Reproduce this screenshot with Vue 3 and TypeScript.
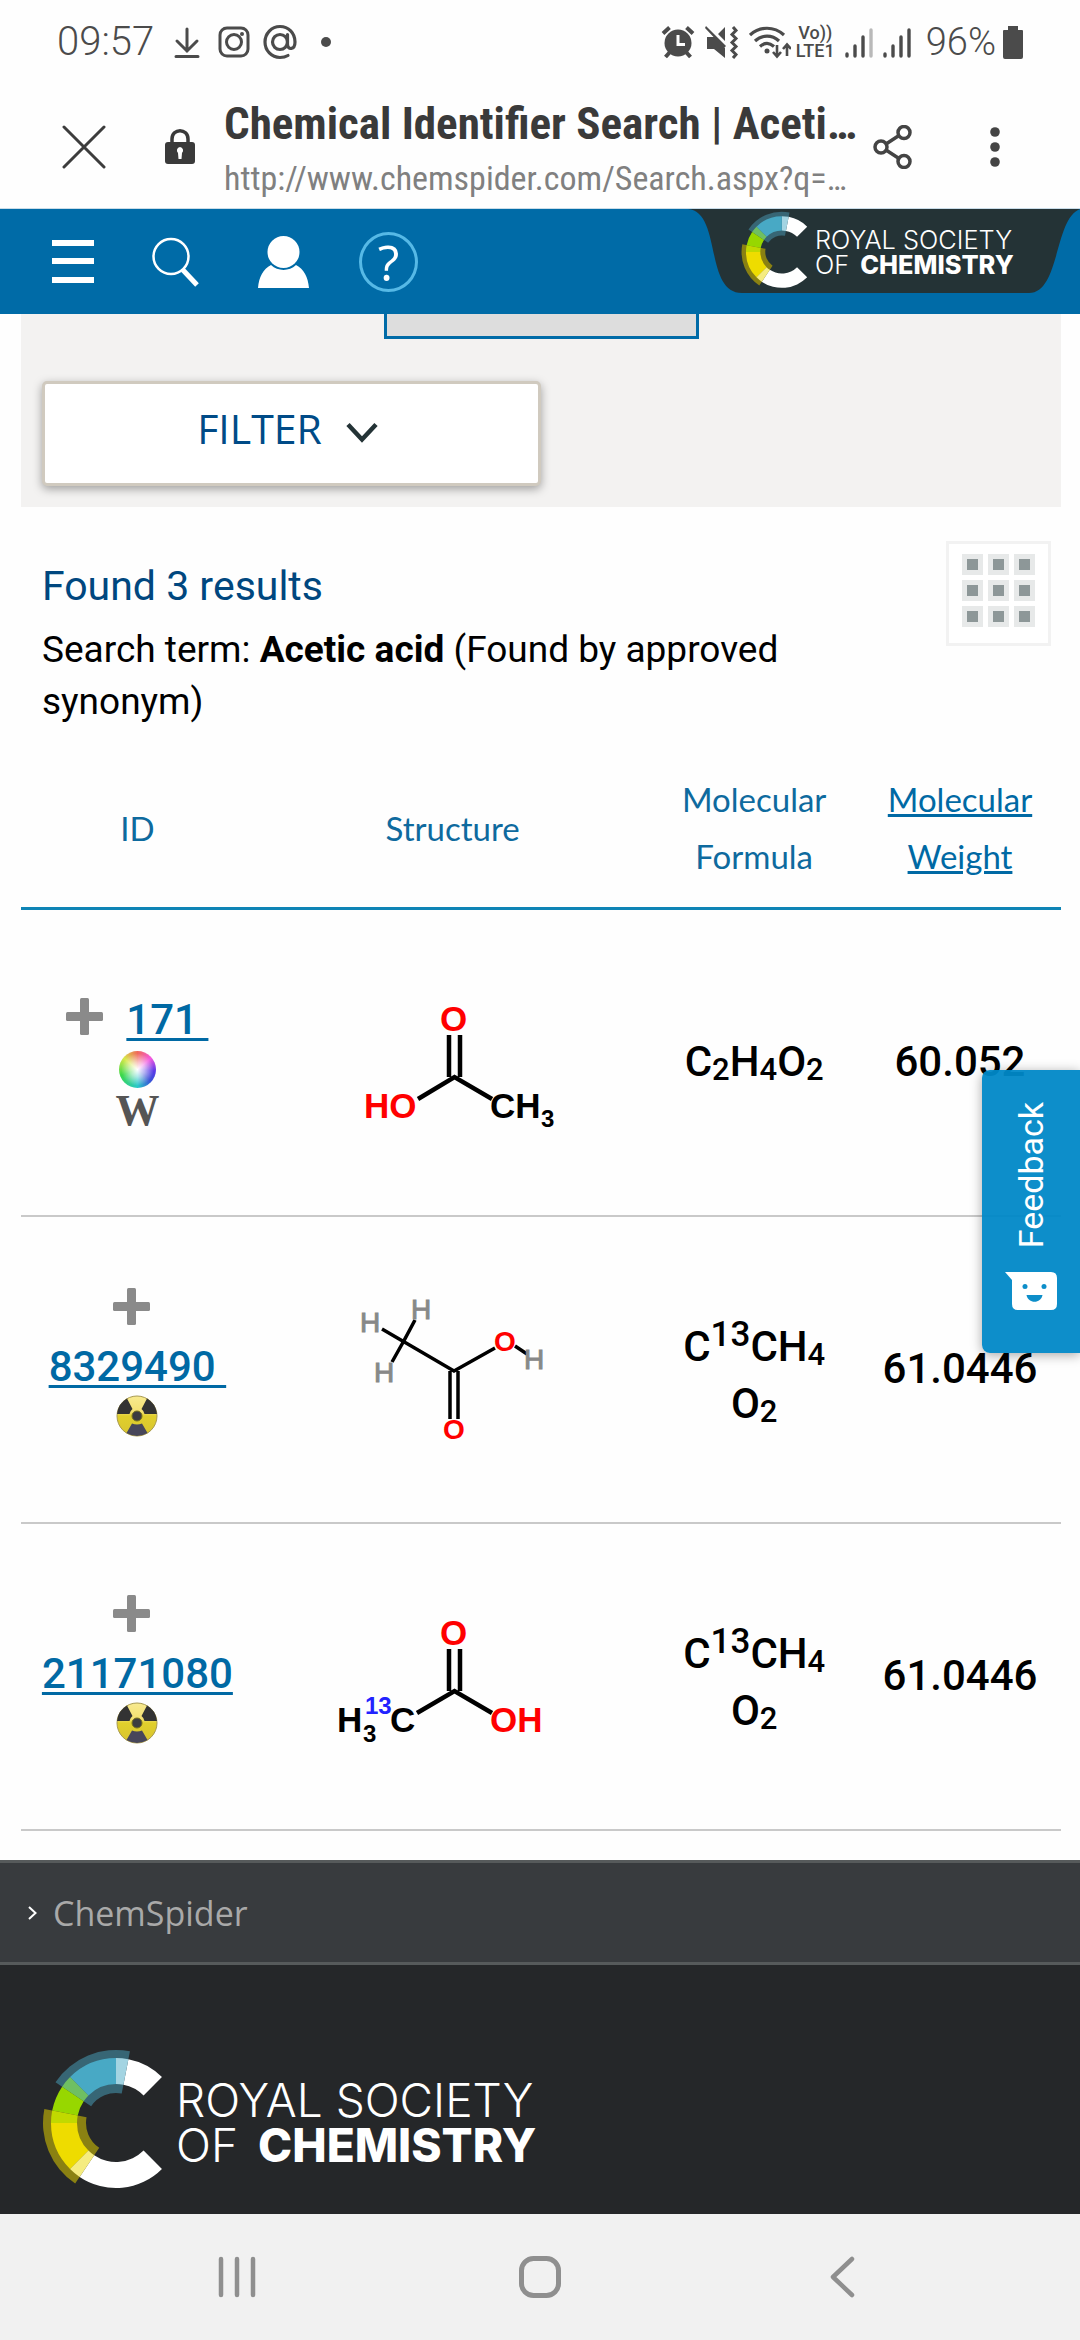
<script setup lang="ts">
interface FormulaPart {
  text: string
  kind: 'base' | 'sub' | 'sup' | 'break'
}

interface Result {
  id: string
  link: string
  inline: boolean
  badges: ('wheel' | 'wiki' | 'radiation')[]
  formula: FormulaPart[]
  weight: string
}

const b = (text: string): FormulaPart => ({ text, kind: 'base' })
const sub = (text: string): FormulaPart => ({ text, kind: 'sub' })
const sup = (text: string): FormulaPart => ({ text, kind: 'sup' })
const brk: FormulaPart = { text: '', kind: 'break' }

const labelled = [b('C'), sup('13'), b('CH'), sub('4'), brk, b('O'), sub('2')]

const results: Result[] = [
  {
    id: '171',
    link: '171 ',
    inline: true,
    badges: ['wheel', 'wiki'],
    formula: [b('C'), sub('2'), b('H'), sub('4'), b('O'), sub('2')],
    weight: '60.052',
  },
  { id: '8329490', link: '8329490 ', inline: false, badges: ['radiation'], formula: labelled, weight: '61.0446' },
  { id: '21171080', link: '21171080', inline: false, badges: ['radiation'], formula: labelled, weight: '61.0446' },
]

// Ring segment around (74, 74); angles in degrees clockwise from the top
function ring(inner: number, outer: number, from: number, to: number): string {
  const p = (r: number, a: number) => {
    const t = (a * Math.PI) / 180
    return `${(74 + r * Math.sin(t)).toFixed(2)} ${(74 - r * Math.cos(t)).toFixed(2)}`
  }
  const big = to - from > 180 ? 1 : 0
  return `M${p(outer, from)}A${outer} ${outer} 0 ${big} 1 ${p(outer, to)}L${p(inner, to)}A${inner} ${inner} 0 ${big} 0 ${p(inner, from)}Z`
}

const segments = [
  { d: ring(30, 73, -56, 11), fill: '#376675' },
  { d: ring(30, 73, -146, -79), fill: '#8a8112' },
  { d: ring(39, 65, 11, 45), fill: '#ffffff' },
  { d: ring(39, 65, 135, 214), fill: '#ffffff' },
  { d: ring(39, 65, 0, 11), fill: '#a3d4e2' },
  { d: ring(39, 65, -45, 0), fill: '#48a9c5' },
  { d: ring(39, 65, -56, -45), fill: '#6fbf62' },
  { d: ring(39, 65, -79, -56), fill: '#97d700' },
  { d: ring(39, 65, -90, -79), fill: '#c1d900' },
  { d: ring(39, 65, -135, -90), fill: '#eedc00' },
  { d: ring(39, 65, -146, -135), fill: '#f5ec80' },
]

const gridCells = [0, 1, 2].flatMap((r) => [0, 1, 2].map((c) => ({ x: c * 26, y: r * 26 })))
</script>

<template>
  <div class="screen">
    <div class="status">
      <span class="clock">09:57</span>
      <svg class="st-down" width="26" height="34" viewBox="0 0 26 34" fill="none" stroke="#4b4b4b" stroke-width="3" stroke-linecap="round">
        <path d="M13 4V26M3 16L13 26L23 16M2 31.500H24" />
      </svg>
      <svg class="st-insta" width="32" height="34" viewBox="0 0 32 34" fill="none" stroke="#4b4b4b" stroke-width="3">
        <rect x="2" y="3" width="28" height="28" rx="7" />
        <circle cx="16" cy="17" r="7.500" />
        <circle cx="24" cy="9" r="2" fill="#4b4b4b" stroke="none" />
      </svg>
      <svg class="st-at" width="34" height="36" viewBox="0 0 34 36" fill="none" stroke="#4b4b4b" stroke-width="3.200" stroke-linecap="round">
        <circle cx="17" cy="18" r="7.500" />
        <path d="M24.500 10.500V20C24.500 26.500 32 26 32 18C32 9 25.500 2.500 17 2.500S2 9.500 2 18S8.500 33.500 17 33.500C20 33.500 22.500 33 25 31.500" />
      </svg>
      <span class="st-dot"></span>
      <span class="grow"></span>
      <svg width="34" height="34" viewBox="0 0 34 34" stroke="#4b4b4b" stroke-width="4">
        <circle cx="17" cy="18" r="13.500" fill="#4b4b4b" stroke="none" />
        <path d="M2 8.500L8.500 2.500M32 8.500L25.500 2.500M9 27L4.500 32M25 27L29.500 32" />
        <path d="M17 10V19.500H24" fill="none" stroke="#fff" stroke-width="3" />
      </svg>
      <svg class="st-mute" width="34" height="34" viewBox="0 0 34 34" fill="#4b4b4b">
        <path d="M2 12H9L20 23V33L9 24H2ZM13 9L20 2V16ZM1 1L21 21L19 23L0 3Z" />
        <path d="M28 2L31 5.500L27 9.500L31 13.500L27 17.500L31 21.500L27 25.500L31 29.500L28 33" fill="none" stroke="#4b4b4b" stroke-width="3" />
      </svg>
      <svg class="st-wifi" width="42" height="34" viewBox="0 0 42 34" fill="none" stroke="#4b4b4b" stroke-width="3.200">
        <path d="M1 10C11 1 25 1 35 10M6 16C13 9.500 23 9.500 30 16M11 21.500C15.500 17.500 20.500 17.500 25 21.500" />
        <circle cx="18" cy="26" r="2.500" fill="#4b4b4b" stroke="none" />
        <path d="M28 20V31M24 27L28 31.500L32 27M38 31V20M34 24L38 19.500L42 24" stroke-width="2.600" />
      </svg>
      <span class="volte"><span>Vo))</span><span>LTE1</span></span>
      <svg class="st-sig" width="28" height="34" viewBox="0 0 28 34" stroke="#4b4b4b" stroke-width="3.400" stroke-linecap="round">
        <path d="M2 29V31M10 21V31M18 12V31" />
        <path d="M26 5V31" stroke="#b9b9b9" />
      </svg>
      <svg class="st-sig" width="28" height="34" viewBox="0 0 28 34" stroke="#4b4b4b" stroke-width="3.400" stroke-linecap="round">
        <path d="M2 29V31M10 21V31M18 12V31M26 5V31" />
      </svg>
      <span class="charge">96%</span>
      <svg class="st-bat" width="22" height="34" viewBox="0 0 22 34" fill="#4b4b4b">
        <path d="M6 1H16V5H20Q21 5 21 6V32Q21 34 19 34H3Q1 34 1 32V6Q1 5 2 5H6Z" />
      </svg>
    </div>

    <div class="toolbar">
      <button class="bare close" aria-label="Close tab">
        <svg width="44" height="44" viewBox="0 0 44 44" stroke="#3c3c3c" stroke-width="3" stroke-linecap="round">
          <path d="M2 2L42 42M42 2L2 42" />
        </svg>
      </button>
      <svg class="lock" width="30" height="36" viewBox="0 0 30 36">
        <path d="M7 15V10C7 -1 23 -1 23 10V15" fill="none" stroke="#3a3a3a" stroke-width="3.500" />
        <rect x="0" y="13" width="30" height="22" rx="3" fill="#3a3a3a" />
        <path d="M15 18A3.500 3.500 0 0 1 17 24L16.500 30H13.500L13 24A3.500 3.500 0 0 1 15 18Z" fill="#fff" />
      </svg>
      <div class="address">
        <div class="page-title">Chemical Identifier Search | Aceti…</div>
        <div class="page-url">http://www.chemspider.com/Search.aspx?q=…</div>
      </div>
      <button class="bare share" aria-label="Share">
        <svg width="40" height="44" viewBox="0 0 40 44" fill="none" stroke="#444" stroke-width="3.500">
          <circle cx="8" cy="22" r="6" /><circle cx="31" cy="7.500" r="6" /><circle cx="31" cy="36.500" r="6" />
          <path d="M13 19L26 10.500M13 25L26 33.500" />
        </svg>
      </button>
      <button class="bare more" aria-label="More options">
        <svg width="10" height="40" viewBox="0 0 10 40" fill="#444">
          <circle cx="5" cy="5" r="4.800" /><circle cx="5" cy="20" r="4.800" /><circle cx="5" cy="35" r="4.800" />
        </svg>
      </button>
    </div>

    <header class="site-bar">
      <button class="bare" aria-label="Menu">
        <svg width="44" height="44" viewBox="0 0 44 44" fill="#fff">
          <path d="M1 0H43V6H1ZM1 18H43V24H1ZM1 37H43V43H1Z" />
        </svg>
      </button>
      <button class="bare find" aria-label="Search">
        <svg width="48" height="50" viewBox="0 0 48 50" fill="none" stroke="#fff">
          <circle cx="19" cy="19.500" r="17.500" stroke-width="2.500" />
          <path d="M31 33L45 48" stroke-width="5" />
        </svg>
      </button>
      <button class="bare user" aria-label="Account">
        <svg width="51" height="54" viewBox="0 0 51 54" fill="#fff">
          <circle cx="25.500" cy="17" r="16" />
          <path d="M0 53C1 42 5 34 13 30C20 36.500 31 36.500 38 30C46 34 50 42 51 53Z" />
        </svg>
      </button>
      <a class="help" href="#help">?</a>
      <a class="brand" href="#rsc" aria-label="Royal Society of Chemistry">
        <svg class="brand-tab" viewBox="0 0 392 84" width="392" height="84" fill="#243336">
          <path d="M0 0C34 3 16 84 54 84H341C372 84 366 10 392 0Z" />
        </svg>
        <svg class="brand-logo" width="277" height="82" viewBox="0 0 502 148">
          <path v-for="(s, i) in segments" :key="i" :d="s.d" :fill="s.fill" />
          <g class="wordmark" fill="#fff">
            <text x="134" y="68">ROYAL SOCIETY</text>
            <text x="134" y="113">OF</text>
            <text class="strong" x="216" y="113">CHEMISTRY</text>
          </g>
        </svg>
      </a>
    </header>

    <main class="content">
      <section class="panel">
        <div class="thumb"></div>
        <button class="filter">
          <span>FILTER</span>
          <svg width="32" height="22" viewBox="0 0 32 22" fill="none" stroke="#243336" stroke-width="4.500">
            <path d="M2 2.500L16 17.500L30 2.500" />
          </svg>
        </button>
      </section>

      <section class="summary">
        <div class="summary-text">
          <h1>Found 3 results</h1>
          <p>Search term: <strong>Acetic acid</strong> (Found by approved synonym)</p>
        </div>
        <button class="grid-view" aria-label="Grid view">
          <svg width="73" height="73" viewBox="0 0 73 73">
            <g v-for="(c, i) in gridCells" :key="i">
              <rect :x="c.x" :y="c.y" width="21" height="21" fill="#e7e9e9" />
              <rect :x="c.x + 5" :y="c.y + 5" width="11" height="11" fill="#8d9798" />
            </g>
          </svg>
        </button>
      </section>

      <div class="results">
        <table>
          <thead>
            <tr>
              <th class="col-id">ID</th>
              <th class="col-structure">Structure</th>
              <th class="col-formula">Molecular Formula</th>
              <th class="col-weight"><a href="#sort-weight">Molecular Weight</a></th>
            </tr>
          </thead>
          <tbody>
            <tr v-for="(r, i) in results" :key="r.id">
              <td>
                <div class="ident" :class="{ stacked: !r.inline }">
                  <div class="ident-line">
                    <button class="bare expand" :aria-label="'Expand ' + r.id">
                      <svg width="37" height="37" viewBox="0 0 37 37" fill="#8a8a8a">
                        <rect x="14" y="0" width="9" height="37" rx="1.500" /><rect x="0" y="14" width="37" height="9" rx="1.500" />
                      </svg>
                    </button>
                    <a :href="'#' + r.id">{{ r.link }}</a>
                  </div>
                  <template v-for="badge in r.badges" :key="badge">
                    <span v-if="badge === 'wheel'" class="badge"><span class="wheel"></span></span>
                    <span v-else-if="badge === 'wiki'" class="badge wiki">W</span>
                    <svg v-else class="badge" viewBox="0 0 42 42">
                      <defs>
                        <linearGradient id="rad" x1="0" y1="0" x2="0" y2="1">
                          <stop offset="0" stop-color="#f8ea90" /><stop offset=".4" stop-color="#f3e070" />
                          <stop offset=".5" stop-color="#e0cf2c" /><stop offset="1" stop-color="#d8c430" />
                        </linearGradient>
                      </defs>
                      <circle cx="21" cy="21" r="20" fill="url(#rad)" stroke="#a89a50" stroke-width="1" />
                      <path d="M1 19A20 20 0 0 1 11 3.500L16.500 14Q14 16 13.500 19Z" fill="#333" />
                      <path d="M41 19A20 20 0 0 0 31 3.500L25.500 14Q28 16 28.500 19Z" fill="#333" />
                      <path d="M10.500 38A20 20 0 0 0 31.500 38L26 28.500Q21 30.500 16 28.500Z" fill="#47465a" />
                      <circle cx="21" cy="21" r="5" fill="#3c3c40" stroke="#76701f" stroke-width="1" />
                    </svg>
                  </template>
                </div>
              </td>
              <td>
                <svg v-if="i === 0" class="molecule" width="300" height="300" viewBox="0 0 300 300">
                  <path d="M146 123V165M157 123V165M115 187L151.500 165L189 187" stroke-width="4.500" />
                  <g class="atom">
                    <text x="137" y="119" class="red">O</text>
                    <text x="61" y="206" class="red">HO</text>
                    <text x="187" y="206">CH</text>
                    <text x="238" y="215" class="small">3</text>
                  </g>
                </svg>
                <svg v-else-if="i === 1" class="molecule" width="300" height="300" viewBox="0 0 300 300">
                  <path d="M79 110L100.500 122.500L112 101M100.500 122.500L89 143M100.500 122.500L151 152L192 129M212 127L224 135M147 152V200M155 152V200" stroke-width="3.500" />
                  <g class="atom light">
                    <text x="57" y="113" class="gray">H</text>
                    <text x="108" y="100" class="gray">H</text>
                    <text x="71" y="163" class="gray">H</text>
                    <text x="221" y="150" class="gray">H</text>
                    <text x="191" y="132" class="red">O</text>
                    <text x="140" y="220" class="red">O</text>
                  </g>
                </svg>
                <svg v-else class="molecule" width="300" height="300" viewBox="0 0 300 300">
                  <path d="M146 123V165M157 123V165M114 187L151.500 165L189 187" stroke-width="4.500" />
                  <g class="atom">
                    <text x="137" y="119" class="red">O</text>
                    <text x="34" y="206">H</text>
                    <text x="60" y="216" class="small">3</text>
                    <text x="62" y="188" class="small blue">13</text>
                    <text x="87" y="206">C</text>
                    <text x="187" y="206" class="red">OH</text>
                  </g>
                </svg>
              </td>
              <td class="formula" :class="{ tall: !r.inline }">
                <template v-for="(p, k) in r.formula" :key="k"
                  ><sub v-if="p.kind === 'sub'">{{ p.text }}</sub
                  ><sup v-else-if="p.kind === 'sup'">{{ p.text }}</sup
                  ><br v-else-if="p.kind === 'break'" /><span v-else>{{ p.text }}</span></template
                >
              </td>
              <td>{{ r.weight }}</td>
            </tr>
          </tbody>
        </table>
        <button class="feedback">
          <span>Feedback</span>
          <svg width="54" height="40" viewBox="0 0 54 40">
            <path d="M1 1H47Q53 1 53 7V33Q53 39 47 39H14Q8 39 8 33V9Z" fill="#fff" />
            <circle cx="21" cy="15.500" r="2.500" fill="#0d8ec9" /><circle cx="40" cy="15.500" r="2.500" fill="#0d8ec9" />
            <path d="M22.500 24H38.500C37 33 24 33 22.500 24Z" fill="#0d8ec9" />
          </svg>
        </button>
      </div>
    </main>

    <footer>
      <a class="foot-link" href="#chemspider">
        <svg width="10" height="14" viewBox="0 0 10 14" fill="none" stroke="#fff" stroke-width="2"><path d="M1 1L7.500 7L1 13" /></svg>
        <span>ChemSpider</span>
      </a>
      <div class="foot-brand">
        <svg width="502" height="148" viewBox="0 0 502 148" role="img" aria-label="Royal Society of Chemistry">
          <path v-for="(s, i) in segments" :key="i" :d="s.d" :fill="s.fill" />
          <g class="wordmark" fill="#fff">
            <text x="134" y="68">ROYAL SOCIETY</text>
            <text x="134" y="113">OF</text>
            <text class="strong" x="216" y="113">CHEMISTRY</text>
          </g>
        </svg>
      </div>
    </footer>

    <nav class="system-nav">
      <button class="bare" aria-label="Recent apps">
        <svg width="44" height="44" viewBox="0 0 44 44" stroke="#8f8f8f" stroke-width="4.500" stroke-linecap="round"><path d="M6 4V40M22 4V40M38 4V40" /></svg>
      </button>
      <button class="bare" aria-label="Home">
        <svg width="44" height="44" viewBox="0 0 44 44" fill="none" stroke="#8f8f8f" stroke-width="5"><rect x="3.500" y="3.500" width="37" height="37" rx="12" /></svg>
      </button>
      <button class="bare" aria-label="Back">
        <svg width="44" height="44" viewBox="0 0 44 44" fill="none" stroke="#8f8f8f" stroke-width="4.500" stroke-linecap="round" stroke-linejoin="round"><path d="M31 4L12 22L31 40" /></svg>
      </button>
    </nav>
  </div>
</template>

<style>
body {
  background: #fff;
}
</style>

<style scoped>
.screen {
  min-height: 100vh;
  display: flex;
  flex-direction: column;
  background: #fefefe;
  color: #000;
  font-family: Roboto, "Liberation Sans", sans-serif;
}
svg {
  display: block;
  flex: none;
}
.bare {
  padding: 0;
  border: 0;
  background: none;
  display: flex;
  align-items: center;
  justify-content: center;
}

/* Status bar */
.status {
  height: 86px;
  box-sizing: border-box;
  padding: 0 56px 3px 57px;
  display: flex;
  align-items: center;
  color: #4b4b4b;
}
.clock {
  font-size: 40px;
  font-weight: 300;
}
.grow {
  flex: 1;
}
.st-down {
  margin-left: 20px;
}
.st-insta {
  margin-left: 18px;
}
.st-at {
  margin-left: 13px;
}
.st-dot {
  width: 10px;
  height: 10px;
  margin-left: 24px;
  border-radius: 50%;
  background: #4b4b4b;
}
.st-mute {
  margin-left: 10px;
}
.st-wifi {
  margin-left: 10px;
}
.volte {
  margin-left: 5px;
  display: flex;
  flex-direction: column;
  align-items: center;
  font-size: 18px;
  line-height: 18px;
  font-weight: 500;
}
.st-sig {
  margin-left: 10px;
}
.charge {
  margin-left: 15px;
  font-size: 38px;
  font-weight: 300;
}
.st-bat {
  margin-left: 6px;
}

/* Browser toolbar */
.toolbar {
  height: 122px;
  display: flex;
  align-items: center;
  padding: 0 80px 0 62px;
  border-bottom: 1px solid #c9dce8;
}
.lock {
  margin-left: 59px;
}
.address {
  flex: 1;
  min-width: 0;
  padding-top: 6px;
  margin-left: 29px;
  white-space: nowrap;
}
.page-title {
  line-height: 56px;
  font-family: "Roboto Condensed", Roboto, sans-serif;
  font-size: 45px;
  font-weight: 700;
  color: #3a3a3a;
}
.page-url {
  line-height: 52px;
  font-family: "Roboto Condensed", Roboto, sans-serif;
  font-size: 34px;
  color: #808080;
}
.more {
  margin-left: 77px;
}

/* Site header */
.site-bar {
  height: 105px;
  position: relative;
  display: flex;
  align-items: center;
  padding-left: 51px;
  background: #006ba7;
}
.find {
  margin-left: 57px;
}
.user {
  margin-left: 58px;
}
.help {
  box-sizing: border-box;
  width: 59px;
  height: 60px;
  margin-left: 50px;
  border: 3px solid #56b9e6;
  border-radius: 50%;
  font: 400 50px/54px "Open Sans", sans-serif;
  text-align: center;
  text-decoration: none;
  color: #fff;
}
.brand {
  position: absolute;
  top: 0;
  right: 0;
}
.brand-logo {
  position: absolute;
  top: 2px;
  left: 53px;
}
.wordmark {
  font-family: Inter, "Liberation Sans", sans-serif;
  font-size: 46px;
  font-weight: 300;
}
.strong {
  font-weight: 800;
}

/* Page body */
.content {
  padding: 0 19px 29px 21px;
}
.panel {
  display: flex;
  flex-direction: column;
  padding: 0 21px 21px;
  background: #f3f2f1;
}
.thumb {
  box-sizing: border-box;
  width: 315px;
  height: 25px;
  align-self: center;
  border: 3px solid #006ba7;
  border-top: 0;
  background: #ddd;
}
.filter {
  box-sizing: border-box;
  width: 50%;
  height: 105px;
  margin-top: 42px;
  padding: 0 8px 12px 0;
  display: flex;
  align-items: center;
  justify-content: center;
  gap: 24px;
  border: 3px solid #d0cabf;
  border-radius: 5px;
  background: #fff;
  box-shadow: 0 3px 10px rgba(0, 0, 0, 0.35);
  font: 400 41px "Open Sans", sans-serif;
  color: #004b87;
}
.filter svg {
  margin-top: 10px;
}
.summary {
  display: flex;
  align-items: flex-start;
  gap: 20px;
  padding: 34px 10px 23px 21px;
}
.summary-text {
  flex: 1;
  padding-top: 17px;
}
.summary h1 {
  margin: 0 0 9px;
  font-size: 41px;
  line-height: 57px;
  font-weight: 400;
  color: #00477f;
}
.summary p {
  margin: 0;
  font-size: 37px;
  line-height: 52px;
}
.grid-view {
  flex: none;
  width: 105px;
  height: 105px;
  padding: 10px 0 0 13px;
  border: 3px solid #f2f2f2;
  background: #fff;
}
.grid-view svg {
  margin-bottom: 16px;
}

/* Results table */
.results {
  position: relative;
}
table {
  width: 100%;
  table-layout: fixed;
  border-spacing: 0;
}
th,
td {
  box-sizing: border-box;
  padding: 0;
  text-align: center;
  vertical-align: middle;
  line-height: 57px;
}
th {
  padding: 20px 0 22px;
  border-bottom: 3px solid #0e84b5;
  font-family: Lato, sans-serif;
  font-size: 33px;
  font-weight: 400;
  color: #0e6a9e;
}
th:first-child,
td:first-child {
  padding-left: 4px;
}
th:last-child,
td:last-child {
  padding-left: 6px;
}
th a,
.ident a {
  color: #0069a4;
  text-decoration: underline;
  text-decoration-thickness: 3px;
}
.col-id {
  width: 22%;
}
.col-structure {
  width: 39%;
}
.col-formula {
  width: 19%;
}
.col-weight {
  width: 20%;
}
td {
  height: 307px;
  padding-bottom: 2px;
  border-bottom: 2px solid #c9c9c9;
  font-size: 42px;
  font-weight: 500;
}
.tall {
  padding-top: 12px;
}
.ident {
  display: flex;
  flex-direction: column;
  align-items: center;
}
.ident-line {
  display: flex;
  align-items: center;
  gap: 12px;
}
.ident a {
  white-space: pre;
  text-underline-offset: 4px;
}
.stacked {
  padding-bottom: 20px;
}
.stacked .ident-line {
  flex-direction: column;
  gap: 0;
}
.expand {
  height: 57px;
  padding: 0 11px 6px 0;
}
.badge {
  width: 42px;
  height: 42px;
  display: flex;
  align-items: center;
  justify-content: center;
}
.wheel {
  width: 37px;
  height: 37px;
  border-radius: 50%;
  background:
    radial-gradient(circle, #fff 0, rgba(255, 255, 255, 0.6) 28%, rgba(255, 255, 255, 0) 62%),
    conic-gradient(#f06a5a, #f45ae0 50deg, #5a3ae8 95deg, #3a50d8 130deg, #2ac8c8 180deg, #3ad84a 250deg, #d8e84a 310deg, #f06a5a);
}
.wiki {
  font-family: "Liberation Serif", serif;
  font-size: 44px;
  font-weight: 700;
  line-height: 42px;
  color: #555;
}
.molecule {
  margin: 0 auto;
  fill: none;
  stroke: #000;
}
.atom {
  stroke: none;
  fill: #000;
  font-family: "Liberation Sans", sans-serif;
  font-size: 35px;
  font-weight: 700;
}
.light {
  font-size: 28px;
}
.small {
  font-size: 24px;
}
.red {
  fill: #f00;
}
.gray {
  fill: #888;
  font-weight: 400;
  stroke: #888;
  stroke-width: 1px;
}
.blue {
  fill: #22f;
}
sub,
sup {
  line-height: 0;
}
sub {
  font-size: 31px;
  vertical-align: -4px;
}
sup {
  font-size: 35px;
  vertical-align: 15px;
}
.feedback {
  position: absolute;
  top: 319px;
  right: -19px;
  width: 98px;
  height: 283px;
  padding: 0 0 10px;
  border: 0;
  border-radius: 8px 0 0 8px;
  display: flex;
  flex-direction: column;
  align-items: center;
  justify-content: center;
  gap: 22px;
  background: rgba(0, 136, 199, 0.95);
  box-shadow: 0 2px 12px rgba(0, 0, 0, 0.35);
  color: #fff;
  font: 400 34px/40px Roboto, sans-serif;
}
.feedback span {
  writing-mode: vertical-rl;
  transform: rotate(180deg);
}

/* Footer */
footer {
  flex: 1;
  background: #252729;
}
.foot-link {
  height: 99px;
  display: flex;
  align-items: center;
  gap: 15px;
  padding-left: 28px;
  border: solid #565a5b;
  border-width: 3px 0;
  background: #383b3e;
  color: #a9a9a9;
  font: 400 34px "Open Sans", sans-serif;
  text-decoration: none;
}
.foot-brand {
  padding: 84px 42px 12px;
}
.system-nav {
  height: 126px;
  display: flex;
  padding: 0 86px;
  background: #f1f1f1;
}
.system-nav button {
  flex: 1;
}
</style>
